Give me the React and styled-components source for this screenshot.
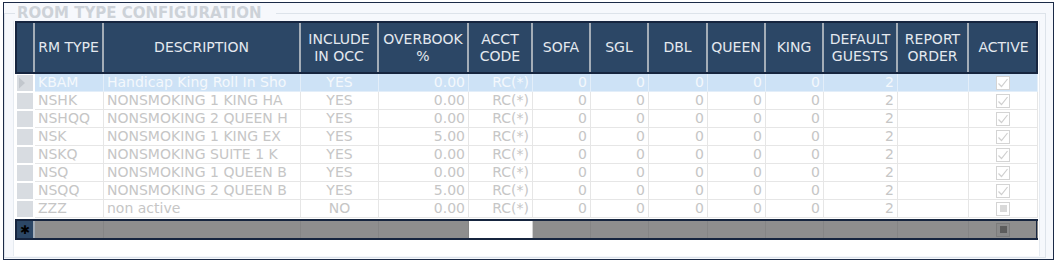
import React from "react";
import styled, { createGlobalStyle } from "styled-components";

const GlobalStyle = createGlobalStyle`
  html, body {
    margin: 0;
    padding: 0;
    background: #ffffff;
  }
  body {
    font-family: "DejaVu Sans", Verdana, sans-serif;
  }
`;

// column widths: row header, rm type, description, include, overbook, acct, sofa, sgl, dbl, queen, king, guests, order, active
const COLUMNS = "20px 69px 197px 78px 90px 64px 58px 58px 59px 58px 58px 74px 71px 69px";

const Frame = styled.div`
  box-sizing: border-box;
  margin: 2px 0 0 3px;
  width: 1051px;
  height: 258px;
  padding-top: 2px;
  border: 1px solid #1b2a47;
  background: #f6f8fc;
`;

const GroupBox = styled.fieldset`
  box-sizing: border-box;
  margin: 0 7px 0 0;
  min-width: 0;
  height: 253px;
  padding: 0 5px 0 8px;
  border: 1px solid #dde3ea;
`;

const Legend = styled.legend`
  margin-left: 2px;
  padding: 0 14px 0 2px;
  font-size: 15px;
  font-weight: bold;
  line-height: 16px;
  color: #cdd2d8;
`;

const Grid = styled.div`
  box-sizing: border-box;
  height: 235px;
  padding: 0 1px;
  border-left: 1px solid #e6ebf1;
  border-right: 1px solid #e6ebf1;
  background: #ffffff;
`;

const Header = styled.div`
  box-sizing: border-box;
  display: grid;
  grid-template-columns: ${COLUMNS};
  height: 53px;
  padding: 2px 0;
  background: #2c4766;
  box-shadow: inset 0 0 0 2px #16253f;
`;

const HeaderCell = styled.div`
  display: flex;
  align-items: center;
  justify-content: center;
  text-align: center;
  border-right: ${(p) => (p.$last ? "none" : "2px solid #a4adb7")};
  color: #e4e9ef;
  font-size: 14px;
  line-height: 17px;
`;

const Row = styled.div`
  display: grid;
  grid-template-columns: ${COLUMNS};
  height: 18px;
  background: ${(p) => (p.$selected ? "#cde2f6" : "#ffffff")};
  color: ${(p) => (p.$selected ? "#f4f8fc" : "#c6c6c6")};
`;

const RowHead = styled.div`
  box-sizing: border-box;
  display: flex;
  align-items: center;
  padding-left: 1px;
  background: #d8dce1;
  border: 1px solid #ffffff;
  border-left-width: 2px;
  border-right-width: 2px;
`;

const Cell = styled.div`
  box-sizing: border-box;
  overflow: hidden;
  white-space: nowrap;
  padding: 0 3px;
  text-align: ${(p) => p.$align || "left"};
  font-size: 14px;
  line-height: 17px;
  border-right: 1px solid ${(p) => (p.$selected ? "#e3eef9" : "#e6e6e6")};
  border-bottom: 1px solid ${(p) => (p.$selected ? "#e3eef9" : "#e6e6e6")};
`;

const CheckCell = styled(Cell)`
  display: flex;
  align-items: center;
  justify-content: center;
`;

const Box = styled.span`
  box-sizing: border-box;
  display: flex;
  align-items: center;
  justify-content: center;
  width: 14px;
  height: 14px;
  border: 1px solid ${(p) => (p.$dark ? "#7c7c7c" : "#d4d4d4")};
  background: ${(p) => (p.$dark ? "#8a8a8a" : "#ffffff")};
`;

const Fill = styled.span`
  width: 7px;
  height: 7px;
  background: ${(p) => (p.$dark ? "#5c5c5c" : "#d9d9d9")};
`;

const NewRow = styled.div`
  box-sizing: border-box;
  display: grid;
  grid-template-columns: ${COLUMNS};
  height: 21px;
  margin-top: 1px;
  padding: 2px 0;
  background: #8e8e8e;
  box-shadow: inset 0 0 0 2px #16253f;
`;

const NewCell = styled.div`
  box-sizing: border-box;
  display: flex;
  align-items: center;
  justify-content: center;
  background: ${(p) => (p.$white ? "#ffffff" : "transparent")};
  border-right: 1px solid ${(p) => (p.$white ? "#d2d2d2" : "#858585")};
`;

const NewHead = styled.div`
  display: flex;
  align-items: center;
  justify-content: center;
  margin-left: 2px;
  border-right: 2px solid #a4adb7;
  background: #2c4766;
  color: #000000;
  font-size: 12px;
  line-height: 12px;
`;

const columns = [
  "",
  "RM TYPE",
  "DESCRIPTION",
  "INCLUDE\nIN OCC",
  "OVERBOOK\n%",
  "ACCT\nCODE",
  "SOFA",
  "SGL",
  "DBL",
  "QUEEN",
  "KING",
  "DEFAULT\nGUESTS",
  "REPORT\nORDER",
  "ACTIVE",
];

const rows = [
  { code: "KBAM", desc: "Handicap King Roll In Sho", occ: "YES", over: "0.00", active: true },
  { code: "NSHK", desc: "NONSMOKING 1 KING HA", occ: "YES", over: "0.00", active: true },
  { code: "NSHQQ", desc: "NONSMOKING 2 QUEEN H", occ: "YES", over: "0.00", active: true },
  { code: "NSK", desc: "NONSMOKING 1 KING EX", occ: "YES", over: "5.00", active: true },
  { code: "NSKQ", desc: "NONSMOKING SUITE 1 K", occ: "YES", over: "0.00", active: true },
  { code: "NSQ", desc: "NONSMOKING 1 QUEEN B", occ: "YES", over: "0.00", active: true },
  { code: "NSQQ", desc: "NONSMOKING 2 QUEEN B", occ: "YES", over: "5.00", active: true },
  { code: "ZZZ", desc: "non active", occ: "NO", over: "0.00", active: false },
];

const Check = () => (
  <Box>
    <svg width="12" height="12" viewBox="0 0 12 12">
      <path d="M1.5 6.5 L4.5 9.5 L10.5 2" fill="none" stroke="#cfcfcf" strokeWidth="1.2" />
    </svg>
  </Box>
);

const Indeterminate = ({ dark }) => (
  <Box $dark={dark}>
    <Fill $dark={dark} />
  </Box>
);

const Arrow = () => (
  <svg width="8" height="12" viewBox="0 0 8 12">
    <path d="M1 0.5 L7 6 L1 11.5 Z" fill="#c2c7cd" />
  </svg>
);

const DataRow = ({ row, selected }) => (
  <Row $selected={selected}>
    <RowHead>{selected && <Arrow />}</RowHead>
    <Cell $selected={selected}>{row.code}</Cell>
    <Cell $selected={selected}>{row.desc}</Cell>
    <Cell $selected={selected} $align="center">{row.occ}</Cell>
    <Cell $selected={selected} $align="right">{row.over}</Cell>
    <Cell $selected={selected} $align="right">RC(*)</Cell>
    {[0, 1, 2, 3, 4].map((i) => (
      <Cell key={i} $selected={selected} $align="right">0</Cell>
    ))}
    <Cell $selected={selected} $align="right">2</Cell>
    <Cell $selected={selected} />
    <CheckCell $selected={selected}>
      {row.active ? <Check /> : <Indeterminate />}
    </CheckCell>
  </Row>
);

export default function App() {
  return (
    <>
      <GlobalStyle />
      <Frame>
        <GroupBox>
          <Legend>ROOM TYPE CONFIGURATION</Legend>
          <Grid>
            <Header>
              {columns.map((label, i) => (
                <HeaderCell key={i} $last={i === columns.length - 1}>
                  {label.split("\n").map((line, j) => (
                    <React.Fragment key={j}>
                      {j > 0 && <br />}
                      {line}
                    </React.Fragment>
                  ))}
                </HeaderCell>
              ))}
            </Header>
            {rows.map((row, i) => (
              <DataRow key={row.code} row={row} selected={i === 0} />
            ))}
            <NewRow>
              <NewHead>✱</NewHead>
              {columns.slice(1).map((_, i) => (
                <NewCell key={i} $white={i === 4}>
                  {i === columns.length - 2 && <Indeterminate dark />}
                </NewCell>
              ))}
            </NewRow>
          </Grid>
        </GroupBox>
      </Frame>
    </>
  );
}
